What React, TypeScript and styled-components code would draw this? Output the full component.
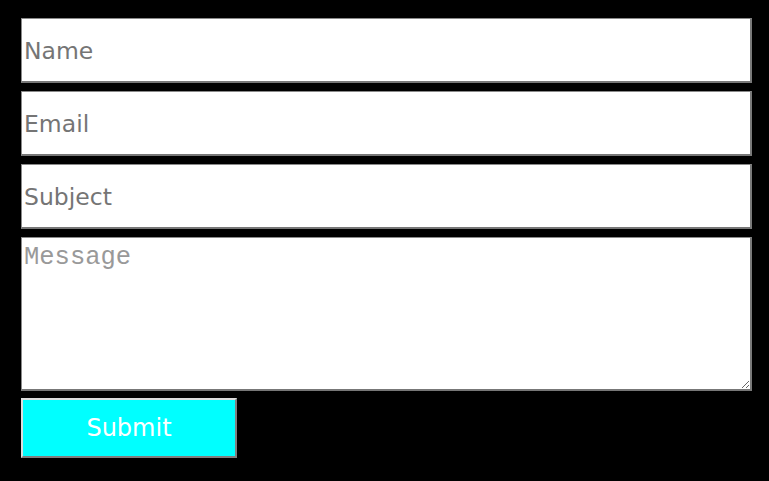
import styled, { createGlobalStyle } from "styled-components";

const GlobalStyle = createGlobalStyle`
  html, body {
    margin: 0;
    padding: 0;
    background: #000;
  }
`;

const Form = styled.form`
  display: flex;
  flex-direction: column;
  gap: 8px;
  width: 731px;
  padding: 18px 0 0 21px;
`;

const Field = styled.input`
  box-sizing: border-box;
  width: 100%;
  height: 65px;
  margin: 0;
  padding: 2px 2px 0;
  background: #fff;
  border-style: solid;
  border-width: 1px 2px 2px 1px;
  border-color: #8a8a8a #7a7a7a #777 #8a8a8a;
  font-family: "DejaVu Sans", Verdana, sans-serif;
  font-size: 23.5px;
  color: #333;
  outline: none;

  &::placeholder {
    color: #757575;
    opacity: 1;
  }
`;

const Message = styled.textarea`
  box-sizing: border-box;
  width: 100%;
  height: 154px;
  margin: 0;
  padding: 5px 2px 2px;
  background: #fff;
  border-style: solid;
  border-width: 1px 2px 2px 1px;
  border-color: #8a8a8a #7a7a7a #777 #8a8a8a;
  font-family: "Liberation Mono", "Courier New", monospace;
  font-size: 25.5px;
  outline: none;
  resize: both;

  &::placeholder {
    color: #999;
    opacity: 1;
  }
`;

const SubmitButton = styled.button`
  box-sizing: border-box;
  width: 216px;
  height: 60px;
  margin: -1px 0 0;
  padding: 0;
  background: #00ffff;
  border-style: solid;
  border-width: 2px;
  border-color: #dcdcdc #808080 #808080 #dcdcdc;
  color: #fff;
  font-family: "DejaVu Sans", Verdana, sans-serif;
  font-size: 24px;
  cursor: pointer;
`;

const App = () => {
  return (
    <>
      <GlobalStyle />
      <Form onSubmit={(e) => e.preventDefault()}>
        <Field type="text" placeholder="Name" />
        <Field type="email" placeholder="Email" />
        <Field type="text" placeholder="Subject" />
        <Message placeholder="Message" />
        <SubmitButton type="submit">Submit</SubmitButton>
      </Form>
    </>
  );
};

export default App;
